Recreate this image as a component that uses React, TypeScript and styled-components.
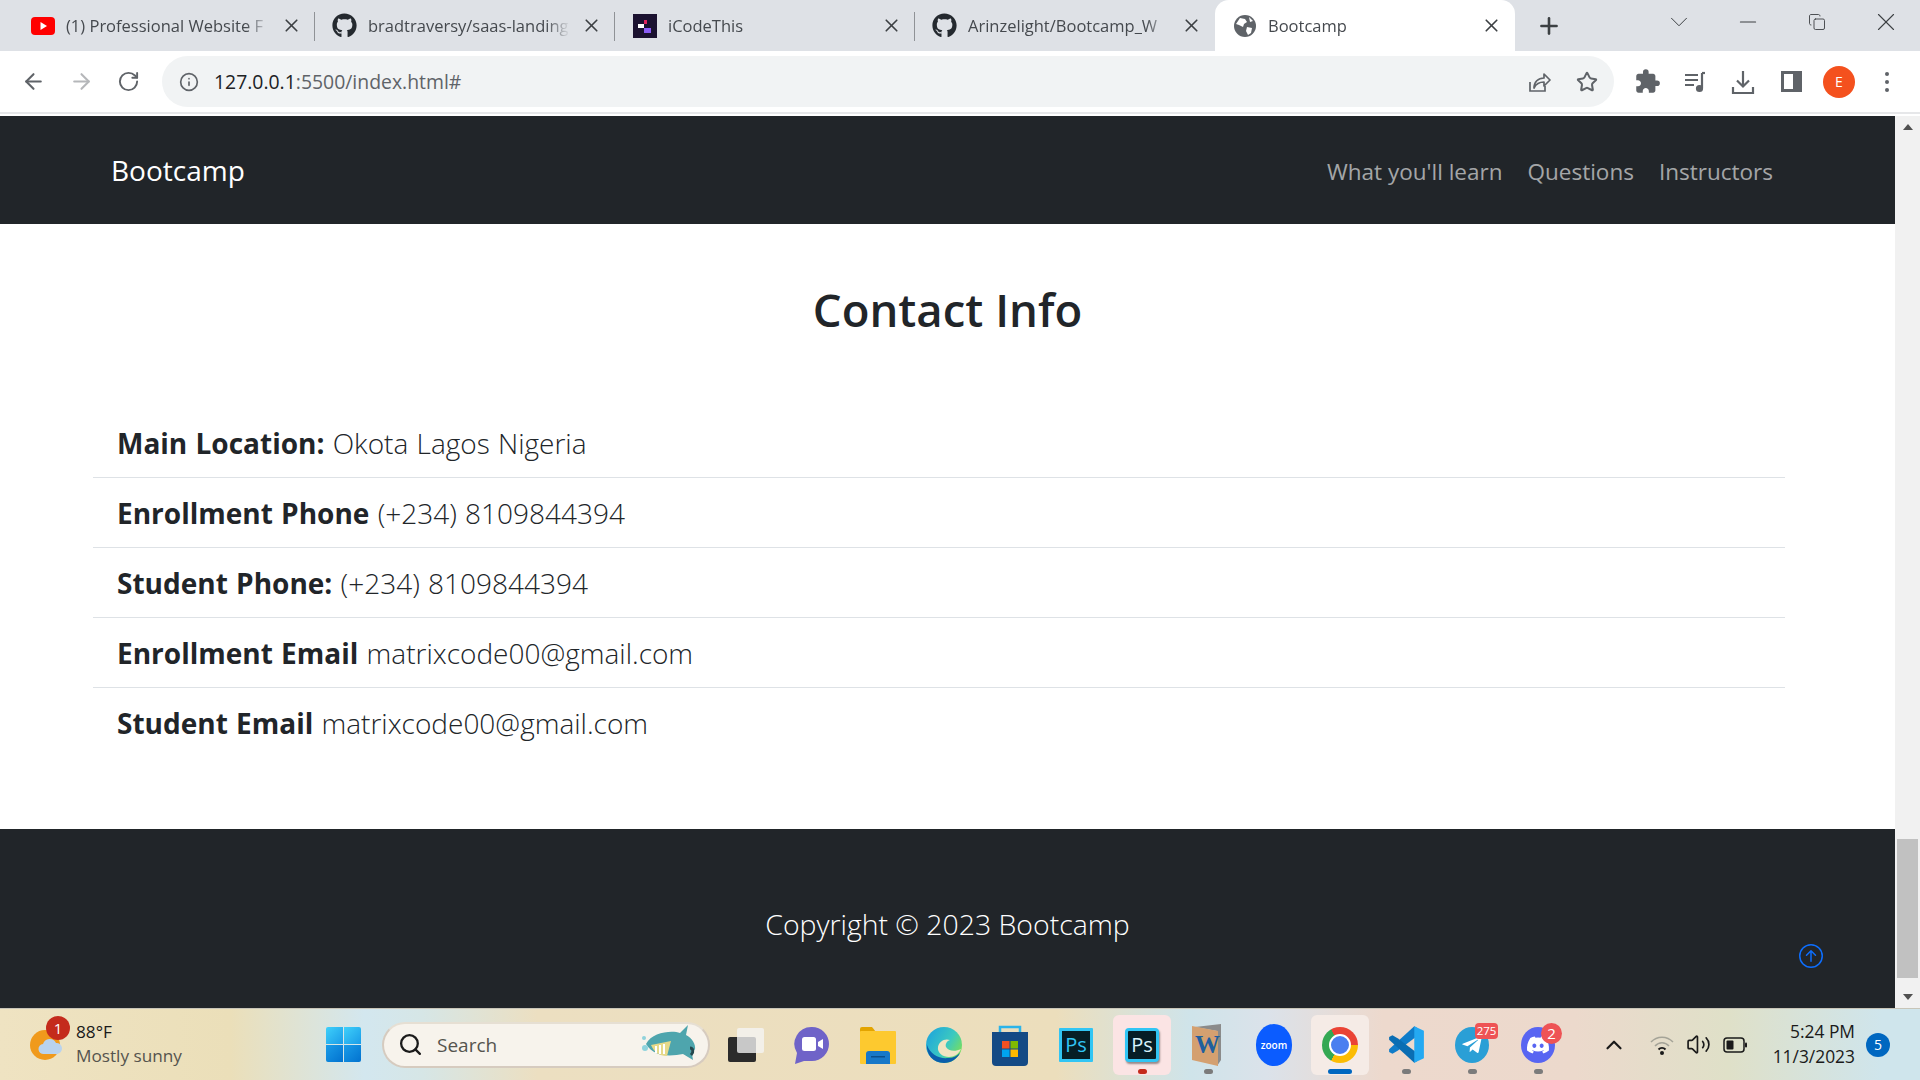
import React from 'react'
import styled, { createGlobalStyle } from 'styled-components'
import {
  ArrowLeft,
  ArrowRight,
  ChevronDown,
  ChevronUp,
  Copy,
  Info,
  Minus,
  Plus,
  RotateCw,
  Search,
  Star,
  Volume2,
  X,
} from 'lucide-react'
import { BsArrowUpCircle } from 'react-icons/bs'
import { FaDiscord, FaGithub, FaTelegramPlane } from 'react-icons/fa'
import { MdExtension } from 'react-icons/md'

const UI_FONT = `'Open Sans', 'Noto Sans', 'Liberation Sans', sans-serif`

const tabs = [
  { title: '(1) Professional Website F', icon: 'youtube' },
  { title: 'bradtraversy/saas-landing', icon: 'github' },
  { title: 'iCodeThis', icon: 'icode' },
  { title: 'Arinzelight/Bootcamp_W', icon: 'github' },
  { title: 'Bootcamp', icon: 'globe', active: true },
]

const contacts = [
  { label: 'Main Location:', value: 'Okota Lagos Nigeria' },
  { label: 'Enrollment Phone', value: '(+234) 8109844394' },
  { label: 'Student Phone:', value: '(+234) 8109844394' },
  { label: 'Enrollment Email', value: 'matrixcode00@gmail.com' },
  { label: 'Student Email', value: 'matrixcode00@gmail.com' },
]

function YoutubeIcon() {
  return (
    <svg width="24" height="18" viewBox="0 0 24 18">
      <rect width="24" height="18" rx="4" fill="#f00" />
      <path d="M9.5 5l6.5 4-6.5 4z" fill="#fff" />
    </svg>
  )
}

function ICodeIcon() {
  return (
    <svg width="24" height="24" viewBox="0 0 24 24">
      <rect width="24" height="24" fill="#1b1230" />
      <rect x="11" y="6" width="3" height="4" fill="#e0245e" />
      <rect x="5" y="10" width="6" height="4" fill="#fff" />
      <rect x="11" y="14" width="7" height="5" fill="#8b5cf6" />
    </svg>
  )
}

function GlobeIcon() {
  return (
    <svg width="22" height="22" viewBox="0 0 22 22">
      <circle cx="11" cy="11" r="11" fill="#5f6368" />
      <path
        d="M6 3l5 1 2 3-3 2-1 3-4-2-3-1zM13 12l5 1-1 5-3 2-2-4zM15 2l4 4-3 1z"
        fill="#fff"
      />
    </svg>
  )
}

function TabIcon({ name }: { name: string }) {
  if (name === 'youtube') return <YoutubeIcon />
  if (name === 'github') return <FaGithub size={25} color="#24292f" />
  if (name === 'icode') return <ICodeIcon />
  return <GlobeIcon />
}

function ShareBoxIcon() {
  return (
    <svg width="24" height="24" viewBox="0 0 24 24" fill="none" stroke="#5f6368" strokeWidth="1.7">
      <path d="M3 12v9h15v-5" />
      <path d="M7 18c0-6 4-10 10-10V4l6 6-6 6v-4c-4 0-8 2-10 6z" strokeLinejoin="round" />
    </svg>
  )
}

function MediaIcon() {
  return (
    <svg width="24" height="24" viewBox="0 0 24 24" fill="none" stroke="#5f6368" strokeWidth="2.2">
      <path d="M2 5h13M2 10h13M2 15h9" />
      <path d="M19 3v15" />
      <path d="M19 3h3" />
      <circle cx="16.500" cy="18.500" r="2.500" fill="#5f6368" />
    </svg>
  )
}

function DownloadTrayIcon() {
  return (
    <svg width="26" height="26" viewBox="0 0 26 26" fill="none" stroke="#5f6368" strokeWidth="2.2">
      <path d="M13 2v15M7 11.500l6 6 6-6" />
      <path d="M3 18v6h20v-6" />
    </svg>
  )
}

function SidePanelIcon() {
  return (
    <svg width="21" height="21" viewBox="0 0 21 21">
      <rect x="1.500" y="1.500" width="18" height="18" fill="none" stroke="#5f6368" strokeWidth="3" />
      <rect x="12" y="1.500" width="8" height="18" fill="#5f6368" />
    </svg>
  )
}

function WindowsLogo() {
  return (
    <svg width="35" height="35" viewBox="0 0 35 35">
      <defs>
        <linearGradient id="winTop" x1="0" y1="0" x2="1" y2="1">
          <stop offset="0" stopColor="#3fd0fa" />
          <stop offset="1" stopColor="#1a9ce8" />
        </linearGradient>
        <linearGradient id="winBottom" x1="0" y1="0" x2="1" y2="1">
          <stop offset="0" stopColor="#1a9ce8" />
          <stop offset="1" stopColor="#0272cf" />
        </linearGradient>
      </defs>
      <path d="M0 2a2 2 0 012-2h15v17H0z" fill="url(#winTop)" />
      <path d="M18 0h15a2 2 0 012 2v15H18z" fill="url(#winTop)" />
      <path d="M0 18h17v17H2a2 2 0 01-2-2z" fill="url(#winBottom)" />
      <path d="M18 18h17v15a2 2 0 01-2 2H18z" fill="url(#winBottom)" />
    </svg>
  )
}

function WeatherIcon() {
  return (
    <svg width="34" height="34" viewBox="0 0 34 34">
      <circle cx="15" cy="17" r="15" fill="#f09a1c" />
      <path d="M14 26a5 5 0 01-1-10 7 7 0 0113-1 5.500 5.500 0 011 11z" fill="#b9d3ee" />
    </svg>
  )
}

function SharkIcon() {
  return (
    <svg width="60" height="42" viewBox="0 0 60 42">
      <path d="M4 20C10 8 30 6 38 9l8-8-2 10c6 3 10 9 9 15l-4-2 2 12-10-6C30 32 12 34 4 20z" fill="#4ea5ad" />
      <path d="M9 21l20-4-4 15c-8 0-13-4-16-11z" fill="#e6d989" />
      <path d="M14 22v7M18 21v9M22 20v10" stroke="#fff" strokeWidth="2" />
      <path d="M48 24c3 0 4 4 1 7" stroke="#24484e" strokeWidth="3" fill="none" />
      <circle cx="2" cy="14" r="2" fill="#8fd3dc" />
      <circle cx="3" cy="24" r="3" fill="#8fd3dc" />
    </svg>
  )
}

function DesktopsIcon() {
  return (
    <svg width="36" height="34" viewBox="0 0 36 34">
      <rect x="0" y="9" width="28" height="25" rx="2" fill="#2b2b2b" />
      <rect x="9" y="0" width="27" height="25" rx="2" fill="#f5f5f5" fillOpacity="0.78" />
    </svg>
  )
}

function TeamsIcon() {
  return (
    <svg width="36" height="40" viewBox="0 0 36 40">
      <path d="M18 2a17 17 0 0117 17 17 17 0 01-17 17H10l-9 3 2-11A17 17 0 0118 2z" fill="#6f63c8" />
      <rect x="8" y="12" width="14" height="14" rx="2.500" fill="#fff" />
      <path d="M24 17l5-3v10l-5-3z" fill="#fff" />
    </svg>
  )
}

function FolderIcon() {
  return (
    <svg width="36" height="38" viewBox="0 0 36 38">
      <path d="M0 3a2 2 0 012-2h10l4 5H0z" fill="#e3a400" />
      <rect y="5" width="36" height="33" rx="1" fill="#fdc92f" />
      <path d="M6 38V28a3 3 0 013-3h18a3 3 0 013 3v10z" fill="#1878c8" />
      <rect x="11" y="30" width="14" height="1.500" fill="#0b4f8c" />
    </svg>
  )
}

function EdgeIcon() {
  return (
    <svg width="36" height="36" viewBox="0 0 36 36">
      <defs>
        <linearGradient id="edgeFill" x1="0" y1="0" x2="1" y2="0.6">
          <stop offset="0" stopColor="#1aa0e0" />
          <stop offset="0.65" stopColor="#3cc9c0" />
          <stop offset="1" stopColor="#74dd62" />
        </linearGradient>
      </defs>
      <circle cx="18" cy="18" r="18" fill="url(#edgeFill)" />
      <path d="M18 36C7 36 0 27 1 18c3 9 12 14 21 13 5 0 9-2 12-5-3 6-9 10-16 10z" fill="#0b5eab" />
      <path d="M35 22c-6 3-13 2-15-2-1-3 1-6 4-7-6-2-11 2-12 7-1 6 5 10 11 10 5 0 10-3 12-8z" fill="#f1e4c2" />
    </svg>
  )
}

function StoreIcon() {
  return (
    <svg width="36" height="42" viewBox="0 0 36 42">
      <path d="M8 10V3h20v7" stroke="#2bb4ea" strokeWidth="2.500" fill="none" />
      <path d="M0 8h36v30a4 4 0 01-4 4H4a4 4 0 01-4-4z" fill="#144a85" />
      <rect x="10" y="17" width="7.500" height="7.500" fill="#f25022" />
      <rect x="18.500" y="17" width="7.500" height="7.500" fill="#7fba00" />
      <rect x="10" y="25.500" width="7.500" height="7.500" fill="#00a4ef" />
      <rect x="18.500" y="25.500" width="7.500" height="7.500" fill="#ffb900" />
    </svg>
  )
}

function WordBookIcon() {
  return (
    <svg width="32" height="42" viewBox="0 0 32 42">
      <path d="M3 3l26-3v36l-4 6V7z" fill="#8b8b8b" />
      <path d="M0 2l26 5v35L0 36z" fill="#d4a070" />
    </svg>
  )
}

function VsCodeIcon() {
  return (
    <svg width="37" height="37" viewBox="0 0 100 100">
      <path d="M71 1l7 4v23L26 67l-14 8-9-5v-7z" fill="#0f7cc9" />
      <path d="M3 30l9-5 14 8 52 39v23l-7 4L3 37z" fill="#0a6db3" />
      <path d="M71 1l26 12v74L71 99z" fill="#24a9f2" />
    </svg>
  )
}

function TrayWifiIcon() {
  return (
    <svg width="24" height="22" viewBox="0 0 24 22" fill="none" strokeWidth="1.500">
      <path d="M1 8c6-6.500 16-6.500 22 0" stroke="#a5a498" />
      <path d="M5 12c4-4.500 10-4.500 14 0" stroke="#a5a498" />
      <path d="M8.500 15.500c2-2 5-2 7 0" stroke="#1a1a1a" strokeWidth="2" />
      <circle cx="12" cy="19" r="2" fill="#1a1a1a" />
    </svg>
  )
}

function BatteryIcon() {
  return (
    <svg width="24" height="16" viewBox="0 0 24 16">
      <rect x="1" y="1" width="20" height="14" rx="3" fill="none" stroke="#1a1a1a" strokeWidth="1.500" />
      <rect x="3.500" y="3.500" width="7" height="9" rx="1" fill="#1a1a1a" />
      <rect x="22" y="5.500" width="2" height="5" rx="1" fill="#1a1a1a" />
    </svg>
  )
}

function Tab({ title, icon, active }: { title: string; icon: string; active?: boolean }) {
  return (
    <TabItem $active={active}>
      <TabFavicon>
        <TabIcon name={icon} />
      </TabFavicon>
      <TabTitle>{title}</TabTitle>
      <X size={21} strokeWidth={1.9} color="#3c4043" />
    </TabItem>
  )
}

export default function App() {
  return (
    <Screen>
      <GlobalStyle />
      <TabBar>
        <TabStrip>
          {tabs.map(tab => (
            <Tab key={tab.title} {...tab} />
          ))}
        </TabStrip>
        <NewTab>
          <Plus size={26} strokeWidth={2.4} color="#3c4043" />
        </NewTab>
        <WindowControls>
          <WindowButton><ChevronDown size={30} strokeWidth={0.8} color="#3c4043" /></WindowButton>
          <WindowButton><Minus size={26} strokeWidth={1} color="#3c4043" /></WindowButton>
          <WindowButton><Copy size={18} strokeWidth={1.2} color="#3c4043" /></WindowButton>
          <WindowButton><X size={30} strokeWidth={0.9} color="#3c4043" /></WindowButton>
        </WindowControls>
      </TabBar>

      <Toolbar>
        <NavButtons>
          <ArrowLeft size={25} color="#5f6368" />
          <ArrowRight size={25} color="#b5b7ba" />
          <RotateCw size={23} color="#5f6368" />
        </NavButtons>
        <Omnibox>
          <Info size={20} color="#5f6368" />
          <Url>
            127.0.0.1<UrlRest>:5500/index.html#</UrlRest>
          </Url>
          <OmniActions>
            <ShareBoxIcon />
            <Star size={22} strokeWidth={2.2} color="#5f6368" />
          </OmniActions>
        </Omnibox>
        <ToolbarIcons>
          <ToolIcon><MdExtension size={27} color="#5f6368" /></ToolIcon>
          <ToolIcon><MediaIcon /></ToolIcon>
          <ToolIcon><DownloadTrayIcon /></ToolIcon>
          <ToolIcon><SidePanelIcon /></ToolIcon>
          <ToolIcon><Avatar>E</Avatar></ToolIcon>
          <ToolIcon>
            <Dots>
              <i />
              <i />
              <i />
            </Dots>
          </ToolIcon>
        </ToolbarIcons>
      </Toolbar>

      <Viewport>
        <Page>
          <Navbar>
            <Brand>Bootcamp</Brand>
            <NavLinks>
              <NavLink>What you'll learn</NavLink>
              <NavLink>Questions</NavLink>
              <NavLink>Instructors</NavLink>
            </NavLinks>
          </Navbar>
          <Contact>
            <Heading>Contact Info</Heading>
            <ContactList>
              {contacts.map(item => (
                <ContactRow key={item.label}>
                  <strong>{item.label}</strong> {item.value}
                </ContactRow>
              ))}
            </ContactList>
          </Contact>
          <Footer>
            <Copyright>Copyright © 2023 Bootcamp</Copyright>
            <ToTop>
              <BsArrowUpCircle size={24} color="#0d6efd" />
            </ToTop>
          </Footer>
        </Page>
        <Scrollbar>
          <ScrollArrow $up />
          <ScrollTrack>
            <ScrollThumb />
          </ScrollTrack>
          <ScrollArrow />
        </Scrollbar>
      </Viewport>

      <Taskbar>
        <Weather>
          <WeatherIconWrap>
            <WeatherIcon />
            <WeatherBadge>1</WeatherBadge>
          </WeatherIconWrap>
          <WeatherText>
            <Temp>88°F</Temp>
            <Forecast>Mostly sunny</Forecast>
          </WeatherText>
        </Weather>
        <Slot>
          <WindowsLogo />
        </Slot>
        <SearchBox>
          <Search size={25} strokeWidth={2.2} color="#1a1a1a" />
          <SearchLabel>Search</SearchLabel>
          <SharkSlot>
            <SharkIcon />
          </SharkSlot>
        </SearchBox>
        <Apps>
          <Slot><DesktopsIcon /></Slot>
          <Slot><TeamsIcon /></Slot>
          <Slot><FolderIcon /></Slot>
          <Slot><EdgeIcon /></Slot>
          <Slot><StoreIcon /></Slot>
          <Slot><PsTile>Ps</PsTile></Slot>
          <Slot $tile="#fbe4e4" $dot="#c42b1c"><PsTile $shadow>Ps</PsTile></Slot>
          <Slot $dot="#7b7b7b">
            <WordWrap>
              <WordBookIcon />
              <WordLetter>W</WordLetter>
            </WordWrap>
          </Slot>
          <Slot><ZoomTile>zoom</ZoomTile></Slot>
          <Slot $tile="#f5ebe6" $dot="#0067c0" $wideDot>
            <ChromeRing>
              <ChromeCore />
            </ChromeRing>
          </Slot>
          <Slot $dot="#7b7b7b"><VsCodeIcon /></Slot>
          <Slot $dot="#7b7b7b">
            <AppCircle $bg="#2a9fd6">
              <FaTelegramPlane size={22} color="#fff" />
              <CountBadge $pill>275</CountBadge>
            </AppCircle>
          </Slot>
          <Slot $dot="#7b7b7b">
            <AppCircle $bg="#5865f2">
              <FaDiscord size={24} color="#fff" />
              <CountBadge>2</CountBadge>
            </AppCircle>
          </Slot>
        </Apps>
        <Tray>
          <TrayChevron>
            <ChevronUp size={26} strokeWidth={2} color="#1a1a1a" />
          </TrayChevron>
          <TrayWifiIcon />
          <Volume2 size={25} strokeWidth={1.6} color="#1a1a1a" />
          <BatteryIcon />
        </Tray>
        <Clock>
          <span>5:24 PM</span>
          <span>11/3/2023</span>
        </Clock>
        <NotifyBadge>5</NotifyBadge>
      </Taskbar>
    </Screen>
  )
}

const GlobalStyle = createGlobalStyle`
  html, body {
    margin: 0;
    height: 100%;
    overflow: hidden;
  }
  * {
    box-sizing: border-box;
  }
`

const Screen = styled.div`
  display: flex;
  flex-direction: column;
  width: 1920px;
  height: 1080px;
  font-family: ${UI_FONT};
  color: #212529;
  background: #fff;
`

const TabBar = styled.div`
  display: flex;
  align-items: stretch;
  height: 51px;
  flex: none;
  padding-left: 15px;
  background: #dee1e6;
`

const TabStrip = styled.div`
  display: flex;
`

const TabItem = styled.div<{ $active?: boolean }>`
  position: relative;
  display: flex;
  align-items: center;
  width: 300px;
  padding: 0 13px 0 17px;
  background: ${p => (p.$active ? '#fff' : 'transparent')};
  border-radius: ${p => (p.$active ? '14px 14px 0 0' : '0')};

  &:first-child {
    padding-left: 15px;
  }

  ${p =>
    !p.$active &&
    `
    &:not(:nth-child(4))::after {
      content: '';
      position: absolute;
      right: 0;
      top: 12px;
      bottom: 10px;
      width: 1px;
      background: #8f9296;
    }
  `}
`

const TabFavicon = styled.span`
  display: flex;
  justify-content: center;
  width: 25px;
  flex: none;
`

const TabTitle = styled.span`
  flex: 1;
  margin: 0 11px 0 11px;
  overflow: hidden;
  white-space: nowrap;
  font-size: 16.5px;
  color: #45494e;
  mask-image: linear-gradient(to right, #000 88%, transparent 100%);
`

const NewTab = styled.div`
  display: flex;
  align-items: center;
  justify-content: center;
  width: 68px;
`

const WindowControls = styled.div`
  display: flex;
  align-items: center;
  margin-left: auto;
  padding-bottom: 8px;
`

const WindowButton = styled.span`
  display: flex;
  justify-content: center;
  width: 69px;
`

const Toolbar = styled.div`
  display: flex;
  align-items: center;
  height: 63px;
  flex: none;
  border-bottom: 2px solid #e6e7e9;
  margin-bottom: 2px;
`

const NavButtons = styled.div`
  display: flex;
  align-items: center;
  gap: 23px;
  width: 162px;
  padding-left: 21px;
`

const Omnibox = styled.div`
  display: flex;
  align-items: center;
  width: 1452px;
  height: 51px;
  padding: 0 16px 0 17px;
  background: #f1f3f4;
  border-radius: 26px;
`

const Url = styled.span`
  margin-left: 15px;
  font-size: 19.4px;
  color: #202124;
`

const UrlRest = styled.span`
  color: #5f6368;
`

const OmniActions = styled.div`
  display: flex;
  align-items: center;
  gap: 25px;
  margin-left: auto;
`

const ToolbarIcons = styled.div`
  display: flex;
  align-items: center;
  flex: 1;
  padding-left: 9px;
`

const ToolIcon = styled.span`
  display: flex;
  align-items: center;
  justify-content: center;
  width: 48px;
  flex: none;
`

const Avatar = styled.div`
  display: flex;
  align-items: center;
  justify-content: center;
  width: 32px;
  height: 32px;
  border-radius: 50%;
  background: #f4511e;
  color: #fff;
  font-size: 14px;
`

const Dots = styled.div`
  display: flex;
  flex-direction: column;
  gap: 4px;

  i {
    width: 4px;
    height: 4px;
    border-radius: 50%;
    background: #5f6368;
  }
`

const Viewport = styled.div`
  display: flex;
  flex: 1;
  min-height: 0;
`

const Page = styled.div`
  display: flex;
  flex-direction: column;
  flex: 1;
  min-width: 0;
`

const Navbar = styled.nav`
  display: flex;
  align-items: center;
  justify-content: space-between;
  height: 108px;
  flex: none;
  padding: 0 122px 0 111px;
  background: #212529;
`

const Brand = styled.a`
  font-size: 28px;
  color: #fff;
`

const NavLinks = styled.div`
  display: flex;
  gap: 25px;
  padding-top: 2px;
`

const NavLink = styled.a`
  font-size: 22.5px;
  color: rgba(255, 255, 255, 0.6);
`

const Contact = styled.section`
  flex: 1;
  padding-top: 46px;
`

const Heading = styled.h1`
  margin: 0 0 60px;
  text-align: center;
  font-size: 45.5px;
  font-weight: 600;
  line-height: 78px;
`

const ContactList = styled.ul`
  margin: 0 110px 0 93px;
  padding: 0;
  list-style: none;
`

const ContactRow = styled.li`
  height: 70px;
  padding: 0 24px;
  font-size: 28px;
  font-weight: 300;
  line-height: 70px;
  word-spacing: 1px;
  border-bottom: 1px solid #dee2e6;

  &:last-child {
    border-bottom: 0;
  }

  strong {
    font-weight: 700;
  }
`

const Footer = styled.footer`
  position: relative;
  display: flex;
  align-items: center;
  justify-content: center;
  height: 179px;
  flex: none;
  padding-top: 10px;
  background: #212529;
`

const Copyright = styled.p`
  margin: 0;
  font-size: 28.4px;
  font-weight: 300;
  color: #fff;
`

const ToTop = styled.a`
  position: absolute;
  right: 72px;
  bottom: 40px;
  display: flex;
`

const Scrollbar = styled.div`
  display: flex;
  flex-direction: column;
  width: 25px;
  flex: none;
  background: #f1f1f1;
`

const ScrollArrow = styled.div<{ $up?: boolean }>`
  width: 0;
  height: 0;
  margin: ${p => (p.$up ? '8px auto 9px' : '10px auto 8px')};
  border-left: 5.5px solid transparent;
  border-right: 5.5px solid transparent;
  border-${p => (p.$up ? 'bottom' : 'top')}: 6px solid #505050;
`

const ScrollTrack = styled.div`
  flex: 1;
  display: flex;
  flex-direction: column;
  justify-content: flex-end;
  padding: 0 2px;
`

const ScrollThumb = styled.div`
  height: 139px;
  margin-bottom: 6px;
  background: #c1c1c1;
`

const Taskbar = styled.div`
  display: flex;
  align-items: center;
  height: 72px;
  flex: none;
  border-top: 1px solid #c8c5b8;
  background: linear-gradient(
    90deg,
    #efe3c2 0%,
    #ebdfb9 12%,
    #d3e7ef 19%,
    #d6e6e6 22%,
    #ecdfc1 28%,
    #ecdebc 55%,
    #cfe4ea 62%,
    #dbe2ea 66%,
    #edd9cd 72%,
    #ecd9cc 82%,
    #dfe0c8 90%,
    #cfe5ec 98%
  );
`

const Weather = styled.div`
  display: flex;
  align-items: center;
  width: 310px;
  flex: none;
  padding-left: 30px;
`

const WeatherIconWrap = styled.div`
  position: relative;
  display: flex;
  width: 46px;
  flex: none;
`

const WeatherBadge = styled.span`
  position: absolute;
  left: 16px;
  top: -12px;
  display: flex;
  align-items: center;
  justify-content: center;
  width: 24px;
  height: 24px;
  border-radius: 50%;
  background: #c42b1c;
  color: #fff;
  font-size: 15px;
`

const WeatherText = styled.div`
  display: flex;
  flex-direction: column;
  gap: 2px;
  margin-top: -2px;
  font-size: 17.2px;
  line-height: 22px;
`

const Temp = styled.span`
  color: #1a1a1a;
`

const Forecast = styled.span`
  color: #55544e;
`

const Slot = styled.div<{ $tile?: string; $dot?: string; $wideDot?: boolean }>`
  position: relative;
  display: flex;
  align-items: center;
  justify-content: center;
  width: 66px;
  height: 60px;
  flex: none;

  ${p =>
    p.$tile &&
    `
    &::before {
      content: '';
      position: absolute;
      inset: 0 4px;
      border-radius: 6px;
      background: ${p.$tile};
    }
    > * { position: relative; }
  `}

  ${p =>
    p.$dot &&
    `
    &::after {
      content: '';
      position: absolute;
      left: 50%;
      bottom: 1px;
      width: ${p.$wideDot ? 24 : 9}px;
      height: 5px;
      margin-left: ${p.$wideDot ? -12 : -4.5}px;
      border-radius: 3px;
      background: ${p.$dot};
    }
  `}
`

const SearchBox = styled.div`
  display: flex;
  align-items: center;
  width: 328px;
  height: 46px;
  margin: 0 3px 0 6px;
  padding: 0 6px 0 14px;
  flex: none;
  background: #f7f3ec;
  border: 2px solid #d6cbbf;
  border-top-color: #e6dfd3;
  border-radius: 23px;
`

const SearchLabel = styled.span`
  margin-left: 14px;
  font-size: 19px;
  color: #55544e;
`

const SharkSlot = styled.span`
  display: flex;
  margin-left: auto;
`

const Apps = styled.div`
  display: flex;
  align-items: center;
`

const PsTile = styled.div<{ $shadow?: boolean }>`
  display: flex;
  align-items: center;
  justify-content: center;
  width: 34px;
  height: 34px;
  border: 3px solid #31c5f4;
  border-radius: ${p => (p.$shadow ? '4px' : '1px')};
  background: #061e26;
  color: ${p => (p.$shadow ? '#d8f3fc' : '#31c5f4')};
  font-size: 20px;
  box-shadow: ${p => (p.$shadow ? '1px 2px 2px rgba(0,0,0,0.4)' : 'none')};
`

const WordWrap = styled.div`
  position: relative;
  display: flex;
`

const WordLetter = styled.span`
  position: absolute;
  left: 3px;
  top: 7px;
  font-family: 'Liberation Serif', serif;
  font-size: 25px;
  font-weight: 700;
  color: #1f5f9e;
`

const ZoomTile = styled.div`
  display: flex;
  align-items: center;
  justify-content: center;
  width: 36px;
  height: 42px;
  border-radius: 50% / 48%;
  background: #0b5cff;
  color: #fff;
  font-size: 10px;
  font-weight: 600;
`

const ChromeRing = styled.div`
  display: flex;
  align-items: center;
  justify-content: center;
  width: 36px;
  height: 36px;
  border-radius: 50%;
  background: conic-gradient(#ea4335 0 90deg, #fbbc04 90deg 210deg, #34a853 210deg 330deg, #ea4335 330deg);
`

const ChromeCore = styled.div`
  width: 18px;
  height: 18px;
  border-radius: 50%;
  border: 2px solid #fff;
  background: #4a7ff0;
  box-sizing: content-box;
`

const AppCircle = styled.div<{ $bg: string }>`
  position: relative;
  display: flex;
  align-items: center;
  justify-content: center;
  width: 34px;
  height: 36px;
  border-radius: 50%;
  background: ${p => p.$bg};
`

const CountBadge = styled.span<{ $pill?: boolean }>`
  position: absolute;
  top: -4px;
  right: ${p => (p.$pill ? '-9px' : '-7px')};
  display: flex;
  align-items: center;
  justify-content: center;
  min-width: ${p => (p.$pill ? '23px' : '21px')};
  height: ${p => (p.$pill ? '16px' : '21px')};
  padding: 0 1px;
  border-radius: ${p => (p.$pill ? '4px' : '50%')};
  background: #ee5355;
  color: #fff;
  font-size: ${p => (p.$pill ? '11.5px' : '15px')};
`

const Tray = styled.div`
  display: flex;
  align-items: center;
  gap: 12px;
  margin-left: 30px;
`

const TrayChevron = styled.span`
  display: flex;
  margin-right: 11px;
`

const Clock = styled.div`
  display: flex;
  flex-direction: column;
  align-items: flex-end;
  width: 100px;
  margin: -2px 0 0 auto;
  font-size: 17.4px;
  line-height: 25px;
  color: #1a1a1a;
`

const NotifyBadge = styled.span`
  display: flex;
  align-items: center;
  justify-content: center;
  width: 24px;
  height: 24px;
  margin: 0 30px 0 11px;
  border-radius: 50%;
  background: #0067c0;
  color: #fff;
  font-size: 14px;
`
